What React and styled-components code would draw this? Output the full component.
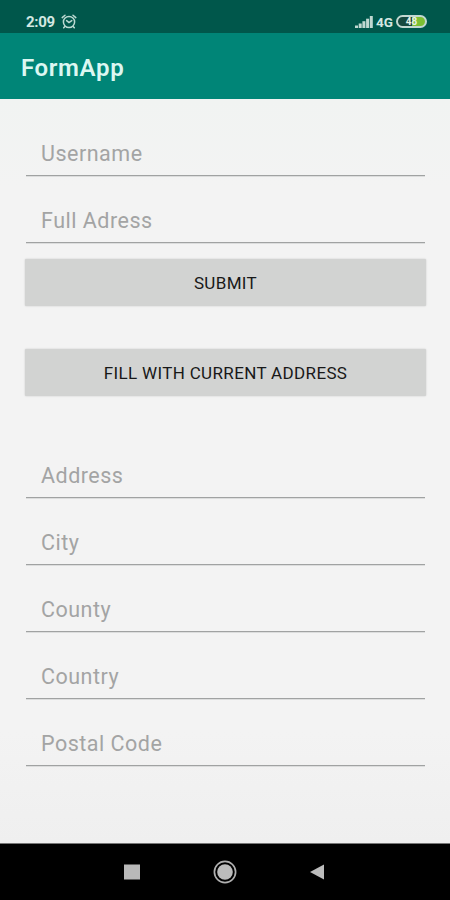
import React from 'react';
import styled, { createGlobalStyle } from 'styled-components';

const GlobalStyle = createGlobalStyle`
    * {
        box-sizing: border-box;
    }

    body {
        margin: 0;
        font-family: Roboto, 'Liberation Sans', sans-serif;
    }
`;

const Screen = styled.div`
    width: 450px;
    height: 900px;
    display: flex;
    flex-direction: column;
    overflow: hidden;
    background: #f3f3f3;
`;

const StatusBar = styled.div`
    height: 33px;
    flex: none;
    display: flex;
    align-items: center;
    justify-content: space-between;
    padding: 10px 23px 0 26px;
    background: #00574b;
    color: #d3e8e2;
`;

const StatusGroup = styled.div`
    display: flex;
    align-items: center;
    gap: ${({ $gap }) => $gap}px;
    height: 22px;
`;

const StatusText = styled.span`
    font-size: ${({ $size }) => $size}px;
    font-weight: 700;
    line-height: 22px;
    letter-spacing: ${({ $spacing }) => $spacing || 0}px;
`;

const Battery = styled.div`
    width: 31px;
    height: 13px;
    display: flex;
    align-items: center;
    justify-content: center;
    border: 2px solid #c2d8d1;
    border-radius: 7px;
    background: linear-gradient(90deg, #16493f 50%, #7dbf32 50%);
    font-size: 10px;
    font-weight: 700;
    line-height: 10px;
    color: #e6f1e6;
`;

const AppBar = styled.header`
    height: 66px;
    flex: none;
    display: flex;
    align-items: center;
    padding: 3px 21px 0;
    background: #008577;
`;

const Title = styled.h1`
    margin: 0;
    font-size: 24px;
    font-weight: 600;
    letter-spacing: 0.65px;
    color: #dcf7f2;
`;

const Form = styled.main`
    flex: 1;
    padding: 10px 24px 0 25px;
    background: linear-gradient(180deg, #f1f3f2 0%, #f3f3f3 12%, #f3f3f3 85%, #efefef 100%);
`;

const Field = styled.div`
    height: 67px;
    margin: 0 1px;
    padding: 0 15px 8px;
    display: flex;
    align-items: flex-end;
    border-bottom: 1px solid #a0a2a2;
    box-shadow: 0 1px 0 #dcdddd;
`;

const Hint = styled.label`
    font-size: 21.5px;
    line-height: 26px;
    letter-spacing: 0.5px;
    color: #a3a4a4;
`;

const Button = styled.button`
    display: block;
    width: 401px;
    height: 47px;
    margin: ${({ $top }) => $top}px 0 0;
    padding: 1px 0 0;
    border: none;
    border-radius: 1px;
    background: #d2d3d2;
    box-shadow: 0 0 2px rgba(0, 0, 0, 0.18);
    font-family: inherit;
    font-size: 17px;
    font-weight: 450;
    letter-spacing: 0.35px;
    color: #181818;
`;

const AddressGroup = styled.section`
    padding-top: 35px;
`;

const NavBar = styled.nav`
    height: 57px;
    flex: none;
    display: flex;
    justify-content: center;
    align-items: center;
    gap: 68px;
    padding-right: 1px;
    border-top: 1px solid #777;
    background: #000;
`;

const AlarmIcon = () => (
    <svg width="16" height="15" viewBox="0 0 16 15" fill="none" stroke="#bcdad2" strokeWidth="1.5" strokeLinecap="round">
        <circle cx="8" cy="8" r="5.6" />
        <path d="M1.2 3.6 L4 1.2 M14.8 3.6 L12 1.2 M3.6 12.7 L2.7 13.8 M12.4 12.7 L13.3 13.8" />
        <path d="M5.6 6.6 L8 8.5 L10.8 6.6" />
    </svg>
);

const SignalIcon = () => (
    <svg width="18" height="12" viewBox="0 0 18 12" fill="#bfd8d1">
        <rect x="0" y="9.5" width="3" height="2.5" />
        <rect x="3.7" y="7.5" width="3" height="4.5" />
        <rect x="7.4" y="5.2" width="3" height="6.8" />
        <rect x="11.1" y="2.7" width="3" height="9.3" />
        <rect x="14.8" y="0" width="3" height="12" />
    </svg>
);

const RecentIcon = () => (
    <svg width="24" height="24" viewBox="0 0 24 24">
        <rect x="4" y="4.5" width="16" height="15" fill="#b9b9b9" />
    </svg>
);

const HomeIcon = () => (
    <svg width="26" height="26" viewBox="0 0 26 26">
        <circle cx="13" cy="13" r="10.6" fill="none" stroke="#b0b0b0" strokeWidth="1.7" />
        <circle cx="13" cy="13" r="7.8" fill="#bcbcbc" />
    </svg>
);

const BackIcon = () => (
    <svg width="24" height="24" viewBox="0 0 24 24">
        <path d="M4 12 L18 4.5 V19.5 Z" fill="#bcbcbc" />
    </svg>
);

const contactFields = ['Username', 'Full Adress'];
const addressFields = ['Address', 'City', 'County', 'Country', 'Postal Code'];

const App = () => (
    <>
        <GlobalStyle />
        <Screen>
            <StatusBar>
                <StatusGroup $gap={6}>
                    <StatusText $size={15} $spacing={-0.3}>2:09</StatusText>
                    <AlarmIcon />
                </StatusGroup>
                <StatusGroup $gap={3}>
                    <SignalIcon />
                    <StatusText $size={13.5}>4G</StatusText>
                    <Battery>48</Battery>
                </StatusGroup>
            </StatusBar>
            <AppBar>
                <Title>FormApp</Title>
            </AppBar>
            <Form>
                {contactFields.map((name) => (
                    <Field key={name}>
                        <Hint>{name}</Hint>
                    </Field>
                ))}
                <Button $top={16}>SUBMIT</Button>
                <Button $top={43}>FILL WITH CURRENT ADDRESS</Button>
                <AddressGroup>
                    {addressFields.map((name) => (
                        <Field key={name}>
                            <Hint>{name}</Hint>
                        </Field>
                    ))}
                </AddressGroup>
            </Form>
            <NavBar>
                <RecentIcon />
                <HomeIcon />
                <BackIcon />
            </NavBar>
        </Screen>
    </>
);

export default App;
